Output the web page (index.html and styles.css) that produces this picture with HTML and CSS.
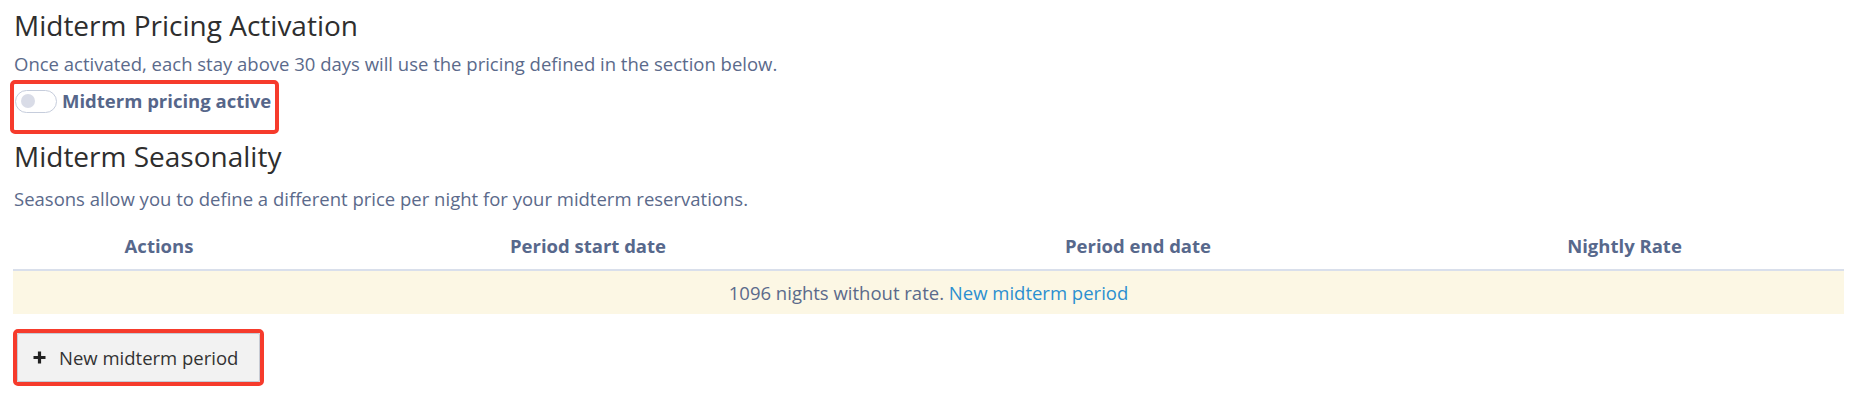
FILE: index.html
```html
<!DOCTYPE html>
<html>
<head>
<meta charset="utf-8">
<link rel="stylesheet" href="styles.css">
</head>
<body>
<div class="page">
  <h2 class="title">Midterm Pricing Activation</h2>
  <p class="desc">Once activated, each stay above 30 days will use the pricing defined in the section below.</p>
  <div class="mark mark-toggle">
    <label class="switch-row">
      <span class="switch"><span class="knob"></span></span>
      <span class="switch-label">Midterm pricing active</span>
    </label>
  </div>
  <h2 class="title title-2">Midterm Seasonality</h2>
  <p class="desc desc-2">Seasons allow you to define a different price per night for your midterm reservations.</p>
  <table class="seasons">
    <colgroup>
      <col class="c1"><col class="c2"><col class="c3"><col class="c4">
    </colgroup>
    <thead>
      <tr><th>Actions</th><th>Period start date</th><th>Period end date</th><th>Nightly Rate</th></tr>
    </thead>
    <tbody>
      <tr class="warn"><td colspan="4">1096 nights without rate. <a href="#" class="link">New midterm period</a></td></tr>
    </tbody>
  </table>
  <div class="mark mark-btn">
    <button class="btn" type="button">
      <svg class="plus" viewBox="0 0 13 13" width="13" height="13"><path d="M6.5 0.5v12M0.5 6.5h12" stroke="#222" stroke-width="3.2" fill="none"/></svg>
      <span>New midterm period</span>
    </button>
  </div>
</div>
</body>
</html>
```

FILE: styles.css
```css
* { box-sizing: border-box; }
html, body { margin: 0; padding: 0; background: #fff; }
body { font-family: "Open Sans", "Liberation Sans", sans-serif; }
.page {
  display: flex;
  flex-direction: column;
  align-items: flex-start;
  padding: 8px 7px 0 13px;
}
.title {
  margin: 0;
  font-size: 28px;
  line-height: 34px;
  font-weight: 400;
  color: #2e2e2e;
  padding-left: 1px;
}
.title-2 { margin-top: 5px; }
.desc {
  margin: 9px 0 0 0;
  font-size: 18.5px;
  line-height: 26px;
  color: #5b6a8b;
  padding-left: 1px;
}
.desc-2 { margin-top: 13px; }
.mark {
  border: 4px solid #f63b2c;
  border-radius: 5px;
}
.mark-toggle {
  margin: 3px 0 0 -3px;
  padding: 4px 4px 16px 1px;
}
.switch-row {
  display: flex;
  align-items: center;
  gap: 5px;
}
.switch {
  width: 42px;
  height: 23px;
  border: 1px solid #c6cddc;
  border-radius: 12px;
  background: #fff;
  display: flex;
  align-items: center;
  padding-left: 5px;
}
.knob {
  width: 14px;
  height: 14px;
  border-radius: 50%;
  background: #d9dce7;
}
.switch-label {
  font-size: 18.5px;
  line-height: 26px;
  font-weight: 700;
  color: #56668a;
}
.seasons {
  margin-top: 11px;
  width: 100%;
  border-collapse: collapse;
  table-layout: fixed;
}
.c1 { width: 292px; }
.c2 { width: 566px; }
.c3 { width: 534px; }
.seasons th {
  font-size: 18.5px;
  line-height: 26px;
  font-weight: 700;
  color: #57688c;
  text-align: center;
  padding: 10px 8px 10px 8px;
  border-bottom: 2px solid #d9dfeb;
}
.seasons td {
  background: #fcf7e4;
  text-align: center;
  font-size: 18.5px;
  line-height: 26px;
  color: #5b6a8b;
  padding: 9px 8px 8px 8px;
}
.link { color: #2b8fd0; text-decoration: none; }
.mark-btn {
  margin-top: 15px;
  padding: 0;
}
.btn {
  display: flex;
  align-items: center;
  gap: 13px;
  height: 49px;
  padding: 0 21px 0 15px;
  background: #f2f2f2;
  border: 1px solid #c7cbd4;
  border-radius: 2px;
  font-family: "Open Sans", "Liberation Sans", sans-serif;
  font-size: 18.5px;
  color: #333;
}
.plus { display: block; }
```
